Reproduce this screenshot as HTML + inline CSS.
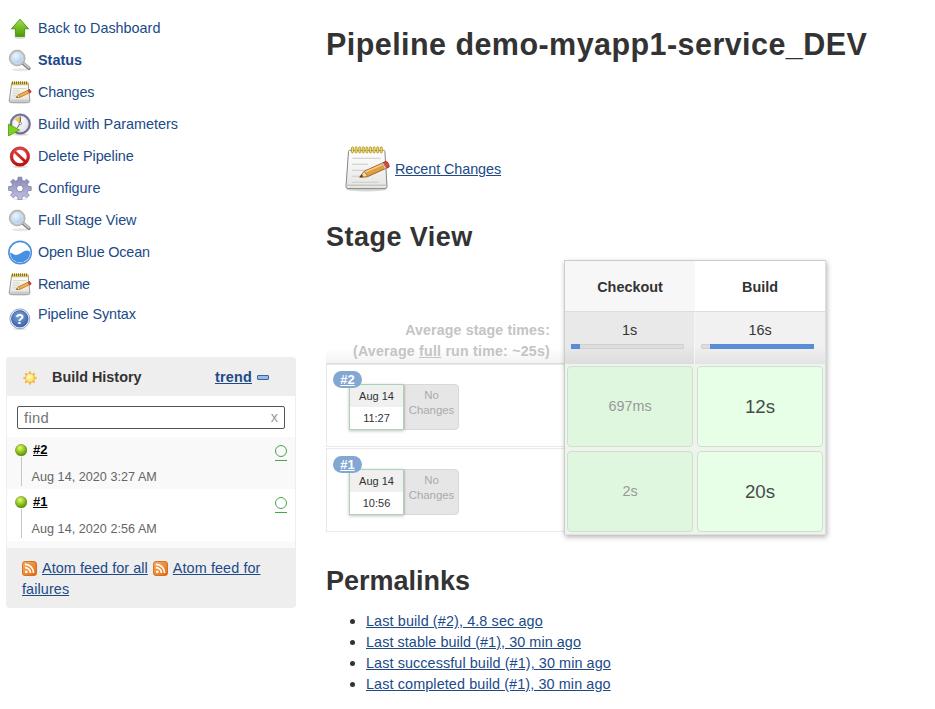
<!DOCTYPE html>
<html><head><meta charset="utf-8"><title>demo-myapp1-service_DEV [Jenkins]</title>
<style>
*{box-sizing:border-box}
html,body{margin:0;padding:0;background:#fff}
body{width:935px;height:709px;overflow:hidden;position:relative;font-family:"Liberation Sans",sans-serif;font-size:14px;color:#333}
a{color:#204a87}
.abs{position:absolute}
/* sidebar */
.task{position:absolute;left:8px;height:24px;width:280px}
.task svg{position:absolute;left:0;top:0;width:24px;height:24px}
.task a{position:absolute;left:30px;top:3px;font-size:14.4px;line-height:18px;text-decoration:none;color:#204a87;white-space:nowrap}
.task a.b{font-weight:bold}
h1{position:absolute;left:326px;top:25px;margin:0;font-size:30.5px;line-height:38px;font-weight:bold;color:#333;white-space:nowrap;letter-spacing:0.44px}
h2{position:absolute;left:326px;margin:0;font-size:27px;line-height:32px;font-weight:bold;color:#333;white-space:nowrap}
</style></head><body>

<!-- SIDEBAR TASKS -->
<div id="tasks">
<svg width="0" height="0" style="position:absolute">
<defs>
<linearGradient id="gUp" x1="0" y1="0" x2="0" y2="1"><stop offset="0" stop-color="#9be24a"/><stop offset="1" stop-color="#4e9a06"/></linearGradient>
<radialGradient id="gLens" cx="0.4" cy="0.35" r="0.7"><stop offset="0" stop-color="#eef6ff"/><stop offset="1" stop-color="#9cc3ea"/></radialGradient>
<linearGradient id="gPaper" x1="0" y1="0" x2="0" y2="1"><stop offset="0" stop-color="#ffffff"/><stop offset="1" stop-color="#e4e4e2"/></linearGradient>
<linearGradient id="gGear" x1="0" y1="0" x2="0" y2="1"><stop offset="0" stop-color="#8689b8"/><stop offset="1" stop-color="#c2c3e0"/></linearGradient>
<radialGradient id="gClock" cx="0.4" cy="0.35" r="0.8"><stop offset="0" stop-color="#ffffff"/><stop offset="1" stop-color="#d9d9de"/></radialGradient>
<linearGradient id="gNo" x1="0" y1="0" x2="0" y2="1"><stop offset="0" stop-color="#e04040"/><stop offset="1" stop-color="#c01010"/></linearGradient>
<radialGradient id="gSun" cx="0.4" cy="0.35" r="0.7"><stop offset="0" stop-color="#fffbd6"/><stop offset="1" stop-color="#fbd94a"/></radialGradient>
<radialGradient id="gHelp" cx="0.45" cy="0.35" r="0.75"><stop offset="0" stop-color="#7ea2d8"/><stop offset="1" stop-color="#2f5aa6"/></radialGradient>
<radialGradient id="gBall" cx="0.4" cy="0.3" r="0.75"><stop offset="0" stop-color="#e8f77a"/><stop offset="0.5" stop-color="#94c81e"/><stop offset="1" stop-color="#557f0a"/></radialGradient>
<linearGradient id="gRss" x1="0" y1="0" x2="1" y2="1"><stop offset="0" stop-color="#f9b064"/><stop offset="1" stop-color="#e56a0c"/></linearGradient>
<g id="icoSearch">
  <ellipse cx="12.5" cy="21.8" rx="8.5" ry="1.5" fill="#000" opacity="0.10"/>
  <path d="M15 15.4 L21 20.4" stroke="#8b8d89" stroke-width="3.4" stroke-linecap="round"/>
  <path d="M15.2 15 L21 19.8" stroke="#d2d4d0" stroke-width="1.3" stroke-linecap="round"/>
  <circle cx="9.2" cy="10" r="7" fill="url(#gLens)" stroke="#c6c9c5" stroke-width="1.8"/>
  <circle cx="9.2" cy="10" r="5.8" fill="none" stroke="#f2f6fb" stroke-width="0.9"/>
  <circle cx="9.2" cy="10" r="7.9" fill="none" stroke="#80827e" stroke-width="0.5"/>
  <circle cx="9.2" cy="10" r="6.1" fill="none" stroke="#8fa9c7" stroke-width="0.4"/>
</g>
<g id="icoNote">
  <ellipse cx="11.6" cy="22.6" rx="10.6" ry="1.2" fill="#000" opacity="0.14"/>
  <path d="M3.7 3.2 H20.1 L21.9 20.8 Q22 22.2 20.6 22.2 H2.5 Q1.1 22.2 1.2 20.8 Z" fill="url(#gPaper)" stroke="#8d8f8a" stroke-width="0.9"/>
  <path d="M1.3 20.2 H21.8" stroke="#b5b7b2" stroke-width="0.8"/>
  <path d="M3.6 2.8 H20.2 L20.4 4.8 H3.4 Z" fill="#ead772" stroke="#b59a2a" stroke-width="0.5"/>
  <path d="M4.5 1.3v3M6.5 1.3v3M8.5 1.3v3M10.5 1.3v3M12.5 1.3v3M14.5 1.3v3M16.5 1.3v3M18.5 1.3v3" stroke="#8c7210" stroke-width="1"/>
  <path d="M5 8.6H18.6M4.8 11H12M4.7 13.4H11M4.6 15.8H8.6" stroke="#cfd1cd" stroke-width="0.9"/>
  <path d="M8.2 17.6 L10.6 14.6 L21.6 9.6 L23 12 L12.2 17.2 Z" fill="#f0b252" stroke="#b4690f" stroke-width="0.7" stroke-linejoin="round"/>
  <path d="M20 10.3 L21.6 9.6 L23.2 12 L21.5 12.8 Z" fill="#e0453a" stroke="#a52a20" stroke-width="0.6"/>
  <path d="M8.2 17.6 L10.6 14.6 L12.2 17.2 Z" fill="#f5dfb4" stroke="#b4690f" stroke-width="0.5"/>
  <path d="M8.2 17.6 L9.3 16.3 L10 17.3 Z" fill="#333"/>
</g>
</defs></svg>

<div class="task" style="top:16px"><svg viewBox="0 0 24 24"><ellipse cx="12" cy="21.6" rx="6" ry="1.3" fill="#000" opacity="0.13"/><path d="M12 3.2 L20.6 12.8 H16.6 V20.4 H7.4 V12.8 H3.4 Z" fill="url(#gUp)" stroke="#4b8f10" stroke-width="0.9" stroke-linejoin="round"/></svg><a>Back to Dashboard</a></div>
<div class="task" style="top:48px"><svg viewBox="0 0 24 24"><use href="#icoSearch"/></svg><a class="b">Status</a></div>
<div class="task" style="top:80px"><svg viewBox="0 0 24 24"><use href="#icoNote"/></svg><a style="letter-spacing:-0.20px">Changes</a></div>
<div class="task" style="top:112px"><svg viewBox="0 0 24 24">
  <ellipse cx="13" cy="22.6" rx="8" ry="1.2" fill="#000" opacity="0.12"/>
  <circle cx="12.3" cy="12" r="9.2" fill="url(#gClock)" stroke="#73719a" stroke-width="2.3"/>
  <circle cx="12.3" cy="12" r="10.3" fill="none" stroke="#5e5c82" stroke-width="0.4"/>
  <circle cx="12.3" cy="12" r="7.9" fill="none" stroke="#dcdbe8" stroke-width="0.8"/>
  <path d="M12.3 12 L12.3 4.4 A7.6 7.6 0 0 0 6.4 7.2 Z" fill="#e9cc5c"/>
  <path d="M12.3 5 V10.4 M11.6 12.2 L9.6 15.4" fill="none" stroke="#444" stroke-width="0.9" stroke-linecap="round"/>
  <circle cx="12.3" cy="11.4" r="1.3" fill="#fff" stroke="#555" stroke-width="0.6"/>
  <path d="M0.5 12.2 L11.6 18 L0.5 24 Z" fill="#7ad321" stroke="#4e9a06" stroke-width="0.8" stroke-linejoin="round"/>
</svg><a>Build with Parameters</a></div>
<div class="task" style="top:144px"><svg viewBox="0 0 24 24">
  <ellipse cx="12" cy="22.8" rx="7.5" ry="1.2" fill="#000" opacity="0.13"/>
  <circle cx="11.9" cy="12.5" r="8.3" fill="#fff" stroke="url(#gNo)" stroke-width="3"/>
  <path d="M6 7 L17.8 18" stroke="url(#gNo)" stroke-width="3"/>
  <circle cx="11.9" cy="12.5" r="9.7" fill="none" stroke="#a01010" stroke-width="0.5"/>
</svg><a style="letter-spacing:-0.08px">Delete Pipeline</a></div>
<div class="task" style="top:176px"><svg viewBox="0 0 24 24">
  <ellipse cx="12" cy="23.2" rx="7" ry="0.9" fill="#000" opacity="0.10"/>
  <g transform="translate(11.9,12.5)">
    <path d="M-2.13 -8.23 L-1.90 -11.34 L1.90 -11.34 L2.13 -8.23 L4.31 -7.32 L6.68 -9.36 L9.36 -6.68 L7.32 -4.31 L8.23 -2.13 L11.34 -1.90 L11.34 1.90 L8.23 2.13 L7.32 4.31 L9.36 6.68 L6.68 9.36 L4.31 7.32 L2.13 8.23 L1.90 11.34 L-1.90 11.34 L-2.13 8.23 L-4.31 7.32 L-6.68 9.36 L-9.36 6.68 L-7.32 4.31 L-8.23 2.13 L-11.34 1.90 L-11.34 -1.90 L-8.23 -2.13 L-7.32 -4.31 L-9.36 -6.68 L-6.68 -9.36 L-4.31 -7.32 Z" fill="url(#gGear)" stroke="#7577a6" stroke-width="0.7" stroke-linejoin="round"/>
    <circle r="3.3" fill="#fff" stroke="#7577a6" stroke-width="0.8"/>
  </g>
</svg><a>Configure</a></div>
<div class="task" style="top:208px"><svg viewBox="0 0 24 24"><use href="#icoSearch"/></svg><a style="letter-spacing:-0.09px">Full Stage View</a></div>
<div class="task" style="top:240px"><svg viewBox="0 0 24 24" style="overflow:visible">
  <circle cx="12.1" cy="12.6" r="11.2" fill="#fff" stroke="#4a90e2" stroke-width="1.6"/>
  <path d="M2.1 12.6 C5 14 6.6 15.4 9.4 14.8 C13 14 15.4 10.4 19.4 10.6 C20.6 10.7 21.6 11.4 22.1 12.4 A10 10 0 0 1 2.1 12.6 Z" fill="#4a90e2"/>
</svg><a style="letter-spacing:-0.17px">Open Blue Ocean</a></div>
<div class="task" style="top:272px"><svg viewBox="0 0 24 24"><use href="#icoNote"/></svg><a style="letter-spacing:-0.48px">Rename</a></div>
<div class="task" style="top:306px"><svg viewBox="0 0 24 24">
  <ellipse cx="12" cy="23.2" rx="7" ry="0.9" fill="#000" opacity="0.12"/>
  <circle cx="11.8" cy="12.8" r="9.9" fill="#fff" stroke="#6f8cc4" stroke-width="0.8"/>
  <circle cx="11.8" cy="12.8" r="8.3" fill="url(#gHelp)" stroke="#2a4f93" stroke-width="0.7"/>
  <text x="11.8" y="18" text-anchor="middle" font-family="Liberation Sans, sans-serif" font-weight="bold" font-size="14.5" fill="#fff">?</text>
</svg><a style="top:-1px;letter-spacing:-0.09px">Pipeline Syntax</a></div>
</div>

<h1>Pipeline demo-myapp1-service_DEV</h1>

<!-- RECENT -->
<div id="recent">
<svg class="abs" style="left:343px;top:144px;width:48px;height:48px" viewBox="0 0 48 48">
  <ellipse cx="23.5" cy="45.6" rx="20" ry="1.8" fill="#000" opacity="0.16"/>
  <path d="M6.6 6.4 H40.8 Q41.8 6.4 41.9 7.4 L44 42.4 Q44.1 44.6 42 44.6 H5 Q2.9 44.6 3 42.4 L5.5 7.4 Q5.6 6.4 6.6 6.4 Z" fill="url(#gPaper)" stroke="#858783" stroke-width="1"/>
  <path d="M3.2 41.2 H43.9" stroke="#b9bbb6" stroke-width="1"/>
  <path d="M9.4 14.2H37.6M9.2 20.2H25M9 26.2H30M8.8 32.2H24M8.6 38.2H36" stroke="#c9cbc7" stroke-width="1.1"/>
  <rect x="8.5" y="2.8" width="2" height="6.2" rx="1" fill="#f5e06a" stroke="#a8860f" stroke-width="0.7"/><rect x="12.1" y="2.8" width="2" height="6.2" rx="1" fill="#f5e06a" stroke="#a8860f" stroke-width="0.7"/><rect x="15.7" y="2.8" width="2" height="6.2" rx="1" fill="#f5e06a" stroke="#a8860f" stroke-width="0.7"/><rect x="19.3" y="2.8" width="2" height="6.2" rx="1" fill="#f5e06a" stroke="#a8860f" stroke-width="0.7"/><rect x="22.9" y="2.8" width="2" height="6.2" rx="1" fill="#f5e06a" stroke="#a8860f" stroke-width="0.7"/><rect x="26.5" y="2.8" width="2" height="6.2" rx="1" fill="#f5e06a" stroke="#a8860f" stroke-width="0.7"/><rect x="30.1" y="2.8" width="2" height="6.2" rx="1" fill="#f5e06a" stroke="#a8860f" stroke-width="0.7"/><rect x="33.7" y="2.8" width="2" height="6.2" rx="1" fill="#f5e06a" stroke="#a8860f" stroke-width="0.7"/><rect x="37.3" y="2.8" width="2" height="6.2" rx="1" fill="#f5e06a" stroke="#a8860f" stroke-width="0.7"/>
  <path d="M16.8 33.2 L21.4 27.2 L42.6 17.6 L45.6 23.2 L24.6 32.6 Z" fill="#dda044" stroke="#9a5a0c" stroke-width="0.9" stroke-linejoin="round"/>
  <path d="M22 28.2 L43 18.8" stroke="#f9d48f" stroke-width="1.4"/>
  <path d="M40 18.8 L42.6 17.6 Q45.6 17.4 46.2 22.8 L43.4 24.2 Z" fill="#e2433a" stroke="#a52a20" stroke-width="0.8" stroke-linejoin="round"/>
  <path d="M38.6 19.4 L40 18.8 L43.4 24.2 L42 24.9 Z" fill="#d9d9d9" stroke="#8a8a8a" stroke-width="0.5"/>
  <path d="M16.8 33.2 L21.4 27.2 L24.6 32.6 Z" fill="#f3dcae" stroke="#a9600c" stroke-width="0.7" stroke-linejoin="round"/>
  <path d="M16.8 33.2 L18.8 30.6 L20.2 32.6 Z" fill="#2d2d2d"/>
</svg>
<a class="abs" style="left:395px;top:160px;font-size:14.4px;line-height:18px;white-space:nowrap;letter-spacing:-0.08px">Recent Changes</a>
</div>

<h2 style="top:221px;letter-spacing:0.47px">Stage View</h2>

<!-- STAGE -->
<div id="stage">
<style>
.sv{position:absolute;left:326px;top:260px;width:500px;height:276px;font-size:13px}
.sv .lbl{position:absolute;right:276px;white-space:nowrap;font-weight:bold;color:#c4c4c4;font-size:14.2px;line-height:18px;text-align:right}
.sv .lhead{position:absolute;left:0;top:52px;width:238px;height:52px;background:linear-gradient(#fff 70%,#f3f3f3);border-bottom:1px solid #ddd}
.sv .lrow{position:absolute;left:0;width:238px;height:84px;background:#fff;border:1px solid #e9e9e9;border-right:none}
.sv .badge{position:absolute;z-index:3;left:6px;top:6px;height:17px;width:29px;border-radius:9px;background:#83a7d3;color:#fff;font-weight:bold;font-size:13px;line-height:18px;text-align:center;text-decoration:underline}
.sv .date{position:absolute;left:22px;top:19px;width:55px;height:46px;border:1px solid #a9d3b5;background:#fff;box-shadow:0 1px 3px rgba(0,0,0,.25);text-align:center;font-size:11px;color:#333;z-index:2}
.sv .date i{display:block;font-style:normal;height:22px;line-height:22px;background:#f0f0f0}
.sv .date b{display:block;font-weight:normal;height:22px;line-height:22px}
.sv .nochg{position:absolute;left:77px;top:19px;width:55px;height:46px;background:#e6e6e6;border:1px solid #d8d8d8;border-radius:0 4px 4px 0;color:#aaa;font-size:11.4px;line-height:15px;text-align:center;padding-top:3px}
.sv .r2 .badge{top:7px}.sv .r2 .date,.sv .r2 .nochg{top:20px}
.sv .box{position:absolute;left:238px;top:0;width:262px;height:275px;background:#ecf4ec;border:1px solid #ccc;border-right-color:#ddd;border-bottom-color:#e2e2e2;box-shadow:1px 2px 5px rgba(0,0,0,.3)}
.sv .th{position:absolute;top:0;height:51px;width:130px;line-height:53px;text-align:center;font-weight:bold;font-size:14.4px;color:#333;border-bottom:1px solid #ddd}
.sv .avg{position:absolute;top:51px;height:52px;width:130px;background:linear-gradient(#e9e9e9 65%,#dcdcdc);text-align:center;font-size:14.4px;color:#333;line-height:18px;padding-top:9px}
.sv .bar{position:absolute;left:6px;top:32px;width:113px;height:5px;background:#ddd;border:1px solid #d0d0d0;border-radius:1px}
.sv .bar s{position:absolute;top:-1px;height:5px;background:#5b8dd6;display:block}
.sv .cell{position:absolute;width:126px;height:81px;border:1px solid #d2ddd2;border-radius:4px;text-align:center;line-height:79px}
.sv .c1{left:2px;background:#dff7df;color:#999;font-size:14.4px}
.sv .c2{left:132px;background:#e6ffe6;color:#4a4a4a;font-size:18.7px}
</style>
<div class="sv">
  <div class="lhead"></div>
  <div class="lbl" style="top:61px;letter-spacing:0.13px">Average stage times:</div>
  <div class="lbl" style="top:82px;letter-spacing:0.22px">(Average <u>full</u> run time: ~25s)</div>
  <div class="lrow" style="top:104px;height:83px"><span class="badge">#2</span><div class="date"><i>Aug 14</i><b>11:27</b></div><div class="nochg">No<br>Changes</div></div>
  <div class="lrow r2" style="top:188px"><span class="badge">#1</span><div class="date"><i>Aug 14</i><b>10:56</b></div><div class="nochg">No<br>Changes</div></div>
  <div class="box">
    <div class="th" style="left:0;background:#f7f7f7">Checkout</div>
    <div class="th" style="left:130px;background:#fff">Build</div>
    <div class="avg" style="left:0;border-right:1px solid #f6f6f6">1s<div class="bar"><s style="left:-1px;width:9px"></s></div></div>
    <div class="avg" style="left:130px;background:linear-gradient(#f1f1f1 65%,#e3e3e3)">16s<div class="bar"><s style="left:8px;width:104px"></s></div></div>
    <div class="cell c1" style="top:105px">697ms</div>
    <div class="cell c2" style="top:105px">12s</div>
    <div class="cell c1" style="top:190px">2s</div>
    <div class="cell c2" style="top:190px">20s</div>
  </div>
</div>
</div>

<h2 style="top:565px">Permalinks</h2>

<!-- PERMALINKS -->
<div id="perma">
<style>
a{text-decoration:underline}
.pl{position:absolute;left:366px;font-size:14.4px;line-height:18px;white-space:nowrap}
.pl:before{content:"";position:absolute;left:-16px;top:7px;width:5px;height:5px;border-radius:50%;background:#333}
</style>
<a class="pl" style="top:612px;letter-spacing:0.114px">Last build (#2), 4.8 sec ago</a>
<a class="pl" style="top:633px;letter-spacing:0.065px">Last stable build (#1), 30 min ago</a>
<a class="pl" style="top:654px;letter-spacing:0.087px">Last successful build (#1), 30 min ago</a>
<a class="pl" style="top:675px;letter-spacing:0.105px">Last completed build (#1), 30 min ago</a>
</div>

<!-- HISTORY -->
<div id="hist">
<style>
.bh{position:absolute;left:6px;top:357px;width:290px;height:251px;background:#eeeeee;border-radius:4px}
.bh .ttl{position:absolute;left:46px;top:11px;font-weight:bold;font-size:14.4px;line-height:18px;color:#333;white-space:nowrap}
.bh .trend{position:absolute;left:209px;top:11px;letter-spacing:0.2px;font-weight:bold;font-size:14.4px;line-height:18px;white-space:nowrap}
.bh .minus{position:absolute;left:251px;top:18px;width:12px;height:5px;border:1px solid #3465a4;background:#9db9e0;border-radius:1px}
.bh .body{position:absolute;left:1px;top:39px;width:288px;height:152px;background:linear-gradient(#fff 145px,#fafafa 145px)}
.bh .find{position:absolute;left:10px;top:10px;width:268px;height:23px;border:1px solid #555;border-radius:2px;background:#fff}
.bh .find span{position:absolute;left:6px;top:2px;font-size:14.8px;letter-spacing:0.3px;line-height:18px;color:#757575}
.bh .find b{position:absolute;right:6px;top:1px;font-weight:normal;font-size:14.5px;line-height:18px;color:#9a9a9a}
.bh .row{position:absolute;left:0;width:288px;height:52px}
.bh .row .ln{position:absolute;left:14px;top:20px;width:1px;height:29px;background:#c6c6c6}
.bh .row svg.ball{position:absolute;left:8px;top:7px;width:12.4px;height:12.4px}
.bh .row a.n{position:absolute;left:26px;top:5px;font-weight:bold;font-size:13px;line-height:16px;color:#000}
.bh .row .d{position:absolute;left:24.6px;top:32px;letter-spacing:0.03px;font-size:12.6px;line-height:16px;color:#666;white-space:nowrap}
.bh .row .o{position:absolute;left:268px;top:8px;width:12px;height:12px;border:1px solid #4aa34a;border-radius:50%}
.bh .row .ou{position:absolute;left:268px;top:23px;width:12px;height:1px;background:#4aa34a}
.bh .feeds{position:absolute;left:16px;top:201px;width:262px;font-size:14.4px;line-height:21px}
.bh .feeds svg{width:15px;height:15px;vertical-align:-3px;margin-right:5px}
</style>
<div class="bh">
  <svg class="abs" style="left:16px;top:13px;width:16px;height:16px" viewBox="0 0 16 16">
    <path d="M14.90 8.00 L11.97 6.64 L11.97 9.36 Z M12.88 12.88 L11.77 9.85 L9.85 11.77 Z M8.00 14.90 L9.36 11.97 L6.64 11.97 Z M3.12 12.88 L6.15 11.77 L4.23 9.85 Z M1.10 8.00 L4.03 9.36 L4.03 6.64 Z M3.12 3.12 L4.23 6.15 L6.15 4.23 Z M8.00 1.10 L6.64 4.03 L9.36 4.03 Z M12.88 3.12 L9.85 4.23 L11.77 6.15 Z" fill="#f5a623" stroke="#f5a623" stroke-width="0.4" stroke-linejoin="round"/>
    <circle cx="8" cy="8" r="4.5" fill="url(#gSun)" stroke="#f3b233" stroke-width="0.7"/>
  </svg>
  <div class="ttl">Build History</div>
  <a class="trend">trend</a><span class="minus"></span>
  <div class="body">
    <div class="find"><span>find</span><b>x</b></div>
    <div class="row" style="top:41px;background:#f9f9f9"><span class="ln"></span><svg class="ball" viewBox="0 0 13 13"><circle cx="6.5" cy="6.5" r="6" fill="url(#gBall)" stroke="#5a8a10" stroke-width="0.6"/></svg><a class="n">#2</a><span class="d">Aug 14, 2020 3:27 AM</span><span class="o"></span><span class="ou"></span></div>
    <div class="row" style="top:93px;background:#fff"><span class="ln"></span><svg class="ball" viewBox="0 0 13 13"><circle cx="6.5" cy="6.5" r="6" fill="url(#gBall)" stroke="#5a8a10" stroke-width="0.6"/></svg><a class="n">#1</a><span class="d">Aug 14, 2020 2:56 AM</span><span class="o"></span><span class="ou"></span></div>
  </div>
  <div class="feeds"><svg viewBox="0 0 15 15"><rect x="0.5" y="0.5" width="14" height="14" rx="2.5" fill="url(#gRss)" stroke="#cc5d15" stroke-width="0.8"/><circle cx="4.3" cy="10.8" r="1.4" fill="#fff"/><path d="M3 6.6a5.4 5.4 0 0 1 5.4 5.4M3 3.4a8.6 8.6 0 0 1 8.6 8.6" fill="none" stroke="#fff" stroke-width="1.6"/></svg><a style="letter-spacing:0.06px">Atom feed for all</a> <svg style="margin-left:1px" viewBox="0 0 15 15"><rect x="0.5" y="0.5" width="14" height="14" rx="2.5" fill="url(#gRss)" stroke="#cc5d15" stroke-width="0.8"/><circle cx="4.3" cy="10.8" r="1.4" fill="#fff"/><path d="M3 6.6a5.4 5.4 0 0 1 5.4 5.4M3 3.4a8.6 8.6 0 0 1 8.6 8.6" fill="none" stroke="#fff" stroke-width="1.6"/></svg><a style="letter-spacing:0.1px">Atom feed for failures</a></div>
</div>
</div>

</body></html>
